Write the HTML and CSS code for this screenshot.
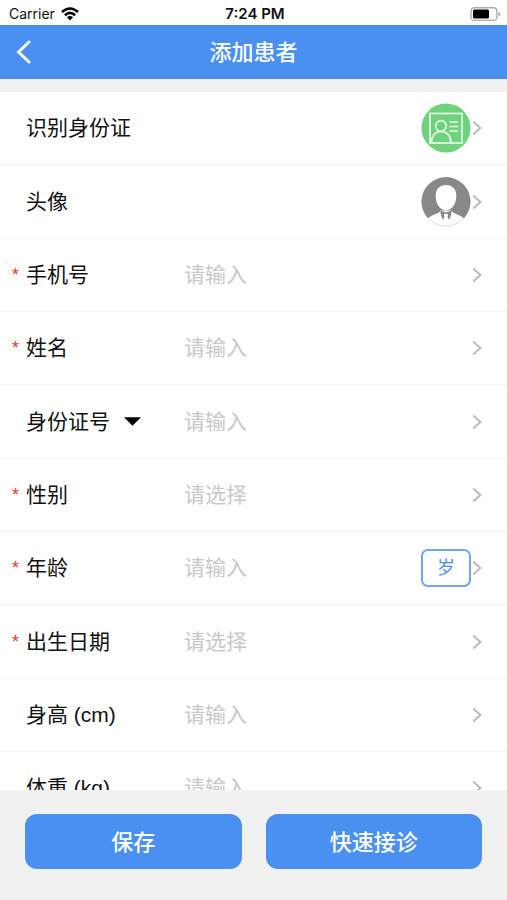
FILE: index.html
```html
<!DOCTYPE html>
<html lang="zh-CN">
<head>
<meta charset="utf-8">
<meta name="viewport" content="width=device-width, initial-scale=1">
<title>添加患者</title>
<link rel="stylesheet" href="styles.css">
</head>
<body>
<svg class="sprite" aria-hidden="true">
  <symbol id="chevron" viewBox="0 0 10 16"><path d="M1.200 1.500 8.400 8l-7.200 6.500" fill="none" stroke="currentColor" stroke-width="2"/></symbol>
</svg>

<div class="status">
  <div class="status-left">
    <span>Carrier</span>
    <svg class="wifi" viewBox="0 0 18 14" aria-hidden="true">
      <g fill="none" stroke="#000" stroke-width="2.600">
        <path d="M1 5Q9-2 17 5"/>
        <path d="M3.900 8.200Q9 3.600 14.100 8.200"/>
      </g>
      <path d="M6 10.200Q9 7.800 12 10.200L9 13.400Z"/>
    </svg>
  </div>
  <time class="clock">7:24 PM</time>
  <svg class="battery" viewBox="0 0 31 14" aria-hidden="true">
    <rect x="1" y="0.800" width="26" height="12.600" rx="3.500" fill="none" stroke="#aaa" stroke-width="1.400"/>
    <rect x="3" y="2.600" width="16" height="9" rx="1.500"/>
    <path d="M28.500 5v4.400q2-.6 2-2.200t-2-2.200z" fill="#aaa"/>
  </svg>
</div>

<header class="nav">
  <button class="back" type="button" aria-label="返回">
    <svg viewBox="0 0 16 24" aria-hidden="true"><path d="M13 2 2.500 12 13 22" fill="none" stroke="#fff" stroke-width="3" stroke-linecap="round"/></svg>
  </button>
  <h1>添加患者</h1>
</header>

<form class="form">
  <main class="rows">
    <button class="row" type="button">
      <span class="label">识别身份证</span>
      <svg class="round" viewBox="0 0 50 50" aria-hidden="true">
        <circle cx="25" cy="25" r="24.500" fill="#6fd27c"/>
        <g fill="none" stroke="#e6fbe8" stroke-width="1.700">
          <rect x="9" y="10.500" width="32" height="29.500"/>
          <circle cx="20" cy="23" r="5.300"/>
          <path d="M10.500 39.500c0-6.500 3.500-11 9.500-11s10 4.500 10 11M28.500 19H37M28.500 23.500H37M28.500 28H37"/>
        </g>
      </svg>
      <svg class="chevron"><use href="#chevron"/></svg>
    </button>
    <button class="row" type="button">
      <span class="label">头像</span>
      <svg class="round" viewBox="0 0 50 50" aria-hidden="true">
        <circle cx="25" cy="25" r="24" fill="#fff" stroke="#ddd"/>
        <path d="M7 41.200A24.500 24.500 0 1 1 43 41.200C39 37.500 32 37 30.500 33.500h-11C18 37 11 37.500 7 41.200Z" fill="#888"/>
        <path d="M25 8c-6.500 0-10.300 4-10.300 11 0 7.500 4 14.300 10.300 14.300s10.300-6.800 10.300-14.300c0-7-3.800-11-10.300-11Z" fill="#fff"/>
        <path d="M19.300 33.500c.2 3.500 1 6.500 2.700 9.500l1.500-3.500-.8-2.500h4.600l-.8 2.500L28 43c1.700-3 2.500-6 2.700-9.500L25 35.500Z" fill="#888"/>
        <path d="m23.300 37.500 1.700-.8 1.700.8-.5 2 1.300 4h-5l1.300-4Z" fill="#fff"/>
      </svg>
      <svg class="chevron"><use href="#chevron"/></svg>
    </button>
    <div class="row required">
      <label class="label" for="phone">手机号</label>
      <input class="value" id="phone" type="tel" placeholder="请输入">
      <svg class="chevron"><use href="#chevron"/></svg>
    </div>
    <div class="row required">
      <label class="label" for="name">姓名</label>
      <input class="value" id="name" type="text" placeholder="请输入">
      <svg class="chevron"><use href="#chevron"/></svg>
    </div>
    <div class="row">
      <div class="label id-type">
        <select aria-label="证件类型"><option>身份证号</option></select>
        <svg class="caret" viewBox="0 0 18 9" aria-hidden="true"><path d="M0 0h18L9 9z"/></svg>
      </div>
      <input class="value" type="text" aria-label="身份证号" placeholder="请输入">
      <svg class="chevron"><use href="#chevron"/></svg>
    </div>
    <div class="row required">
      <label class="label" for="sex">性别</label>
      <button class="value" id="sex" type="button">请选择</button>
      <svg class="chevron"><use href="#chevron"/></svg>
    </div>
    <div class="row required">
      <label class="label" for="age">年龄</label>
      <input class="value" id="age" type="text" placeholder="请输入">
      <button class="unit" type="button">岁</button>
      <svg class="chevron"><use href="#chevron"/></svg>
    </div>
    <div class="row required">
      <label class="label" for="birth">出生日期</label>
      <button class="value" id="birth" type="button">请选择</button>
      <svg class="chevron"><use href="#chevron"/></svg>
    </div>
    <div class="row">
      <label class="label" for="height">身高 (cm)</label>
      <input class="value" id="height" type="text" placeholder="请输入">
      <svg class="chevron"><use href="#chevron"/></svg>
    </div>
    <div class="row">
      <label class="label" for="weight">体重 (kg)</label>
      <input class="value" id="weight" type="text" placeholder="请输入">
      <svg class="chevron"><use href="#chevron"/></svg>
    </div>
  </main>
  <footer class="actions">
    <button type="button">保存</button>
    <button type="button">快速接诊</button>
  </footer>
</form>
</body>
</html>
```
FILE: styles.css
```css
* { box-sizing: border-box; }

body {
  margin: 0;
  height: 100vh;
  display: flex;
  flex-direction: column;
  background: #fff;
  color: #111;
  font: 21px/32px "Liberation Sans", "Noto Sans CJK SC", sans-serif;
}

button, input, select {
  margin: 0;
  padding: 0;
  border: 0;
  background: none;
  color: inherit;
  font: inherit;
  text-align: left;
  appearance: none;
}

.sprite { display: none; }

.status {
  flex: none;
  display: grid;
  grid-template-columns: 1fr auto 1fr;
  align-items: center;
  height: 25px;
  padding: 2px 6px 0 9px;
  font-family: Inter, sans-serif;
  font-size: 14px;
  line-height: 20px;
}
.status-left { display: flex; align-items: center; gap: 6px; }
.wifi { width: 18px; height: 14px; }
.clock { font-size: 15px; font-weight: 600; }
.battery { width: 31px; height: 14px; justify-self: end; }

.nav {
  flex: none;
  display: grid;
  grid-template-columns: 1fr auto 1fr;
  align-items: center;
  height: 54px;
  padding: 0 16px;
  background: #4a90f0;
  color: #fff;
  font-family: Inter, "Noto Sans CJK SC", sans-serif;
}
.nav h1 { margin: 0; font-size: 22px; font-weight: 500; }
.back svg { display: block; width: 16px; height: 24px; }

.form {
  flex: 1;
  min-height: 0;
  display: flex;
  flex-direction: column;
}

.rows {
  flex: 1;
  min-height: 0;
  overflow: hidden;
  border-top: 13px solid #f1f1f1;
}

.row {
  display: flex;
  align-items: center;
  width: 100%;
  height: 73px;
  padding: 0 25px 0 26px;
  border-bottom: 1px solid #f4f4f4;
}
.row:nth-child(3n + 2) { height: 74px; }

.required { padding-left: 12px; }
.required::before {
  content: "*";
  width: 14px;
  color: #e8362d;
  font-size: 18px;
}

.label { flex: none; width: 158px; }
.id-type { display: flex; align-items: center; gap: 14px; }
.caret { width: 17px; height: 9px; }

.value { flex: 1; min-width: 0; color: #c8c8c8; }
.value::placeholder { color: #c8c8c8; opacity: 1; }

.round { width: 50px; height: 50px; margin-left: auto; }
.chevron { flex: none; width: 10px; height: 16px; margin-left: 1px; color: #bbb; }

.unit {
  width: 50px;
  height: 38px;
  border: 2px solid #6ca5f3;
  border-radius: 7px;
  color: #4a90f0;
  font-size: 18px;
  text-align: center;
}

.actions {
  flex: none;
  display: flex;
  gap: 24px;
  padding: 24px 25px 31px;
  background: #f1f1f1;
  font-family: Inter, "Noto Sans CJK SC", sans-serif;
}
.actions button {
  flex: 1;
  height: 55px;
  border-radius: 12px;
  background: #4a90f0;
  color: #fff;
  font-size: 22px;
  font-weight: 500;
  text-align: center;
}
```
